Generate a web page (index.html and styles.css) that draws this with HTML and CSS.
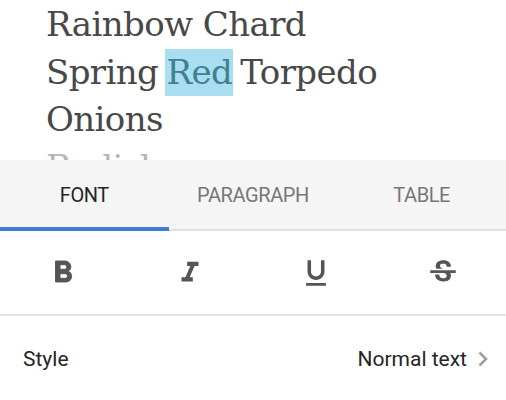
FILE: index.html
```html
<!DOCTYPE html>
<html>
<head>
<meta charset="utf-8">
<link rel="stylesheet" href="styles.css">
</head>
<body>
<div class="doc">
  <div class="line">Rainbow Chard</div>
  <div class="line">Spring <span class="hl">Red</span> Torpedo</div>
  <div class="line">Onions</div>
  <div class="line faded">Radishes</div>
</div>
<div class="panel">
  <div class="tabs">
    <div class="tab active">FONT</div>
    <div class="tab">PARAGRAPH</div>
    <div class="tab">TABLE</div>
  </div>
  <div class="formats">
    <div class="fmt">
      <svg width="36" height="36" viewBox="0 0 24 24"><path fill="#555" stroke="#555" stroke-width="0.6" d="M15.6 10.79c.97-.67 1.65-1.77 1.65-2.79 0-2.26-1.75-4-4-4H7v14h7.04c2.09 0 3.710-1.7 3.71-3.79 0-1.52-.86-2.82-2.15-3.42zM10 6.5h3c.83 0 1.5.67 1.5 1.5s-.67 1.5-1.5 1.5h-3v-3zm3.5 9H10v-3h3.5c.83 0 1.5.67 1.5 1.5s-.67 1.5-1.5 1.5z"/></svg>
    </div>
    <div class="fmt">
      <svg width="34" height="34" viewBox="0 0 24 24"><path fill="#555" d="M10 4v3h2.21l-3.42 8H6v3h8v-3h-2.21l3.42-8H18V4z"/></svg>
    </div>
    <div class="fmt">
      <svg width="34" height="34" viewBox="0 0 24 24"><path fill="#555" d="M12 17c3.31 0 6-2.69 6-6V3h-2.5v8c0 1.93-1.57 3.5-3.5 3.5S8.5 12.93 8.5 11V3H6v8c0 3.31 2.69 6 6 6zm-7 2v2h14v-2H5z"/></svg>
    </div>
    <div class="fmt">
      <svg width="34" height="34" viewBox="0 0 24 24"><path fill="#555" d="M7.24 8.75c-.26-.48-.39-1.030-.39-1.67 0-.61.13-1.16.4-1.67.26-.5.63-.93 1.11-1.29.48-.35 1.05-.63 1.7-.83.66-.19 1.39-.29 2.18-.29.81 0 1.54.11 2.21.34.66.22 1.23.54 1.69.94.47.4.83.88 1.08 1.43.25.55.38 1.15.38 1.81h-3.01c0-.31-.05-.59-.15-.85-.09-.27-.24-.49-.44-.68-.2-.19-.45-.33-.75-.44-.3-.1-.66-.16-1.06-.16-.39 0-.74.04-1.03.13-.29.09-.53.21-.72.36-.19.16-.34.34-.44.55-.1.21-.15.43-.15.66 0 .48.25.88.74 1.21.38.25.77.48 1.41.7H7.39c-.05-.08-.11-.17-.15-.25zM21 12v-2H3v2h9.62c.18.07.4.14.55.2.37.17.66.34.87.51.21.17.35.36.43.57.07.2.11.43.11.69 0 .23-.05.45-.14.66-.09.2-.23.38-.42.53-.19.15-.42.26-.71.35-.29.08-.63.13-1.01.13-.43 0-.83-.04-1.18-.13s-.66-.23-.91-.42c-.25-.19-.45-.44-.59-.75-.14-.31-.25-.76-.25-1.21H6.4c0 .55.08 1.13.24 1.58.16.45.37.85.65 1.21.28.35.6.66.98.92.37.26.78.48 1.22.65.44.17.9.3 1.38.39.48.08.96.13 1.44.13.8 0 1.53-.09 2.18-.28s1.21-.45 1.67-.79c.46-.34.82-.77 1.07-1.27s.38-1.07.38-1.71c0-.6-.1-1.14-.31-1.61-.05-.11-.11-.23-.17-.33H21z"/></svg>
    </div>
  </div>
  <div class="row">
    <span class="label">Style</span>
    <span class="value">Normal text<svg class="chev" width="12" height="18" viewBox="0 0 12 18"><path d="M2.5 2.5 L9 9 L2.5 15.5" fill="none" stroke="#a0a0a0" stroke-width="2.6"/></svg></span>
  </div>
</div>
</body>
</html>
```

FILE: styles.css
```css
html, body {
  margin: 0;
  padding: 0;
  background: #fff;
}
body {
  width: 506px;
  height: 400px;
  overflow: hidden;
}
.doc {
  height: 159px;
  overflow: hidden;
  padding: 1px 0 0 46px;
  font-family: "DejaVu Serif", serif;
  font-size: 34px;
  letter-spacing: -0.6px;
  line-height: 47.5px;
  color: #484848;
}
.line {
  white-space: nowrap;
}
.hl {
  display: inline-block;
  background: #a9def0;
  color: #3e8190;
  padding: 0 1px 0 1px;
  margin-left: -3px;
  margin-right: -3px;
  height: 47.5px;
}
.faded {
  color: #b5b5b5;
}
.panel {
  font-family: Roboto, "Liberation Sans", sans-serif;
}
.tabs {
  display: grid;
  grid-template-columns: repeat(3, 1fr);
  background: #f5f5f5;
  border-bottom: 2px solid #e0e0e0;
  height: 69px;
}
.tab {
  display: flex;
  align-items: center;
  justify-content: center;
  font-size: 20px;
  letter-spacing: -0.4px;
  color: #777;
  border-bottom: 4px solid transparent;
  margin-bottom: -2px;
  padding-top: 2px;
}
.tab.active {
  color: #262626;
  border-bottom-color: #3d7fd3;
}
.formats {
  display: grid;
  grid-template-columns: repeat(4, 1fr);
  height: 83px;
  border-bottom: 2px solid #e6e6e6;
}
.fmt {
  display: flex;
  align-items: center;
  justify-content: center;
}
.row {
  display: flex;
  justify-content: space-between;
  align-items: center;
  height: 86px;
  padding: 0 17px 0 23px;
  font-size: 21px;
  color: #252525;
}
.value {
  display: flex;
  align-items: center;
  gap: 10px;
}
```
